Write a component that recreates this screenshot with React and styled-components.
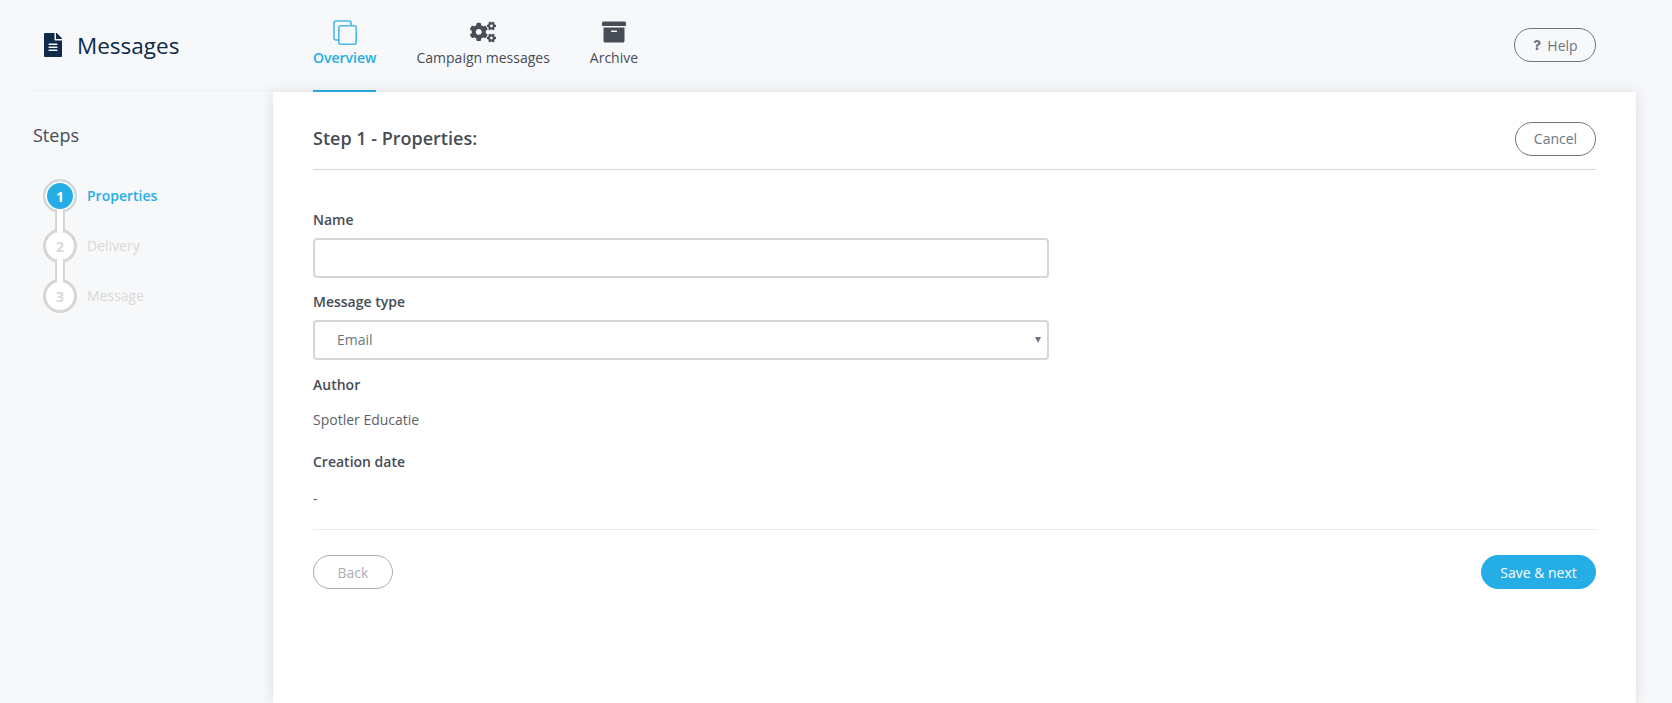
import styled, { createGlobalStyle } from "styled-components";
import { FaCogs, FaArchive, FaFileAlt, FaQuestion } from "react-icons/fa";

const GlobalStyle = createGlobalStyle`
  html, body {
    margin: 0;
    padding: 0;
    height: 100%;
    overflow: hidden;
    background: #f7f8fa;
    font-family: "Open Sans", "Noto Sans", sans-serif;
    color: #474c55;
  }
`;

const Page = styled.div`
  height: 703px;
  display: flex;
  flex-direction: column;
  overflow: hidden;
`;

const Header = styled.header`
  height: 92px;
  flex: none;
  display: flex;
  align-items: stretch;
  padding-right: 76px;
`;

const Brand = styled.div`
  width: 313px;
  flex: none;
  display: flex;
  align-items: center;
  gap: 12px;
  padding: 0 0 2px 41px;
  box-sizing: border-box;
  color: #0f2a4a;
`;

const BrandName = styled.h1`
  margin: 0;
  font-size: 22.5px;
  font-weight: 400;
  color: #0f2a4a;
`;

const Nav = styled.nav`
  display: flex;
  gap: 40px;
  flex: 1;
`;

const NavItem = styled.a`
  display: flex;
  flex-direction: column;
  align-items: center;
  padding-top: 20px;
  box-sizing: border-box;
  height: 92px;
  font-size: 14px;
  color: ${({ $active }) => ($active ? "#25aee6" : "#474c55")};
  font-weight: ${({ $active }) => ($active ? 600 : 400)};
  border-bottom: 2px solid ${({ $active }) => ($active ? "#25aee6" : "transparent")};
`;

const NavIcon = styled.span`
  height: 24px;
  display: flex;
  align-items: center;
  justify-content: center;
  margin-bottom: 4px;
  font-size: ${({ $size }) => $size}px;
`;

const HelpArea = styled.div`
  display: flex;
  align-items: flex-start;
  padding-top: 28px;
`;

const Pill = styled.button`
  height: 34px;
  width: ${({ $w }) => $w}px;
  padding: 0;
  box-sizing: border-box;
  display: inline-flex;
  align-items: center;
  justify-content: center;
  gap: 5px;
  border-radius: 17px;
  border: 1px solid ${({ $dim }) => ($dim ? "#a9aeb5" : "#6c7681")};
  background: transparent;
  font-family: inherit;
  font-size: 14px;
  color: ${({ $dim }) => ($dim ? "#a9aeb5" : "#6c7681")};
`;

const PrimaryPill = styled(Pill)`
  border-color: #25aee6;
  background: #25aee6;
  color: #fff;
`;

const Body = styled.div`
  flex: 1;
  display: flex;
  min-height: 0;
`;

const Sidebar = styled.aside`
  width: 240px;
  margin-left: 33px;
  flex: none;
  padding-top: 32px;
  box-sizing: border-box;
  box-shadow: 0 -2px 6px rgba(70, 75, 90, 0.05);
  clip-path: inset(-10px 0 0 0);
`;

const SidebarTitle = styled.h2`
  margin: 0 0 32px;
  font-size: 18px;
  line-height: 23px;
  font-weight: 400;
  color: #474c55;
`;

const StepList = styled.ol`
  list-style: none;
  margin: 0;
  padding: 0 0 0 10px;
  display: flex;
  flex-direction: column;
  gap: 16px;
`;

const Step = styled.li`
  position: relative;
  display: flex;
  align-items: center;
  gap: 10px;
  height: 34px;
  font-size: 14px;
  font-weight: ${({ $active }) => ($active ? 600 : 400)};
  color: ${({ $active }) => ($active ? "#25aee6" : "#d8d8d8")};

  &:not(:last-child)::after {
    content: "";
    position: absolute;
    z-index: 2;
    left: 12px;
    top: 30px;
    width: 10px;
    height: 23px;
    box-sizing: border-box;
    background: #fff;
    border-left: 2.5px solid #d6d6d6;
    border-right: 2.5px solid #d6d6d6;
  }
`;

const StepLabel = styled.span`
  padding-bottom: 2px;
`;

const StepDot = styled.span`
  position: relative;
  z-index: 1;
  width: 34px;
  height: 34px;
  flex: none;
  box-sizing: border-box;
  border-radius: 50%;
  border: ${({ $active }) => ($active ? 2 : 3)}px solid #d6d6d6;
  background: ${({ $active }) => ($active ? "#25aee6" : "#fff")};
  box-shadow: ${({ $active }) => ($active ? "inset 0 0 0 2px #fff" : "none")};
  display: flex;
  align-items: center;
  justify-content: center;
  font-size: 14px;
  font-weight: 700;
  color: ${({ $active }) => ($active ? "#fff" : "#d8d8d8")};
`;

const Panel = styled.main`
  width: 1363px;
  flex: none;
  background: #fff;
  box-shadow: 0 0 12px rgba(70, 75, 90, 0.16);
  padding: 0 40px;
  box-sizing: border-box;
`;

const PanelHead = styled.div`
  height: 78px;
  box-sizing: border-box;
  display: flex;
  align-items: center;
  justify-content: space-between;
  padding-top: 16px;
  border-bottom: 1px solid #d6d6d6;
`;

const PanelTitle = styled.h2`
  margin: 0 0 2px;
  font-size: 18px;
  font-weight: 600;
  color: #474c55;
`;

const Form = styled.form`
  padding-top: 40px;
  width: 736px;
`;

const Label = styled.div`
  font-size: 14px;
  line-height: 20px;
  font-weight: 600;
  color: #474c55;
  margin-bottom: 8px;
`;

const TextInput = styled.input`
  display: block;
  width: 100%;
  height: 40px;
  box-sizing: border-box;
  border: 2px solid #d6d6d6;
  border-radius: 4px;
  background: #fff;
  margin-bottom: 14px;
  outline: none;
`;

const SelectBox = styled.div`
  height: 40px;
  box-sizing: border-box;
  border: 2px solid #d6d6d6;
  border-radius: 4px;
  background: #fff;
  margin-bottom: 15px;
  padding: 0 6px 1px 22px;
  display: flex;
  align-items: center;
  justify-content: space-between;
  font-size: 14px;
  color: #6c7681;
`;

const Caret = styled.span`
  width: 0;
  height: 0;
  border-left: 3px solid transparent;
  border-right: 3px solid transparent;
  border-top: 6px solid #6c7681;
`;

const Value = styled.div`
  font-size: 14px;
  line-height: 20px;
  color: #5c626b;
  padding-top: ${({ $top }) => $top}px;
  margin-bottom: ${({ $top }) => 29 - $top}px;
`;

const Footer = styled.div`
  margin-top: 12px;
  padding-top: 25px;
  border-top: 1px solid #ececec;
  display: flex;
  justify-content: space-between;
`;

const CopyIcon = () => (
  <svg width="24" height="25" viewBox="0 0 24 25" fill="none" stroke="#4db8ea" strokeWidth="1.6">
    <path d="M18 5.5V3a2 2 0 0 0-2-2H3a2 2 0 0 0-2 2v15a2 2 0 0 0 2 2h2.5" />
    <rect x="5.8" y="5.8" width="17.4" height="18.4" rx="2" />
  </svg>
);

const steps = ["Properties", "Delivery", "Message"];

export default function App() {
  return (
    <Page>
      <GlobalStyle />
      <Header>
        <Brand>
          <FaFileAlt size={24} />
          <BrandName>Messages</BrandName>
        </Brand>
        <Nav>
          <NavItem $active>
            <NavIcon><CopyIcon /></NavIcon>
            Overview
          </NavItem>
          <NavItem>
            <NavIcon $size={26}><FaCogs /></NavIcon>
            Campaign messages
          </NavItem>
          <NavItem>
            <NavIcon $size={24}><FaArchive /></NavIcon>
            Archive
          </NavItem>
        </Nav>
        <HelpArea>
          <Pill $w={82}>
            <FaQuestion size={10} />
            Help
          </Pill>
        </HelpArea>
      </Header>
      <Body>
        <Sidebar>
          <SidebarTitle>Steps</SidebarTitle>
          <StepList>
            {steps.map((name, i) => (
              <Step key={name} $active={i === 0}>
                <StepDot $active={i === 0}>{i + 1}</StepDot>
                <StepLabel>{name}</StepLabel>
              </Step>
            ))}
          </StepList>
        </Sidebar>
        <Panel>
          <PanelHead>
            <PanelTitle>Step 1 - Properties:</PanelTitle>
            <Pill $w={81}>Cancel</Pill>
          </PanelHead>
          <Form>
            <Label>Name</Label>
            <TextInput />
            <Label>Message type</Label>
            <SelectBox>
              Email
              <Caret />
            </SelectBox>
            <Label>Author</Label>
            <Value $top={7}>Spotler Educatie</Value>
            <Label>Creation date</Label>
            <Value $top={9}>-</Value>
          </Form>
          <Footer>
            <Pill $w={80} $dim>Back</Pill>
            <PrimaryPill $w={115}>Save &amp; next</PrimaryPill>
          </Footer>
        </Panel>
      </Body>
    </Page>
  );
}
